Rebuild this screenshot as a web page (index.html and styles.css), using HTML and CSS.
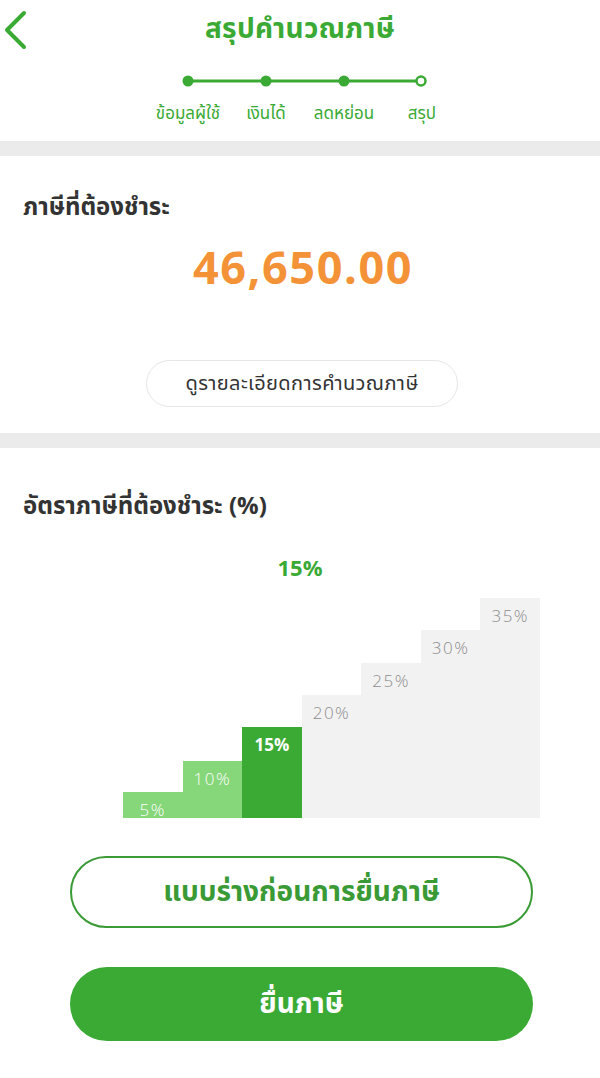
FILE: index.html
```html
<!DOCTYPE html>
<html lang="th">
<head>
<meta charset="utf-8">
<title>สรุปคำนวณภาษี</title>
<link rel="stylesheet" href="styles.css">
</head>
<body>
<div class="page">
  <header class="header">
    <div class="top-row">
      <button class="back" aria-label="back">
        <svg width="24" height="40" viewBox="0 0 24 40"><path d="M21 3 L4 20 L21 37" fill="none" stroke="#3aaa35" stroke-width="4" stroke-linecap="round" stroke-linejoin="round"/></svg>
      </button>
      <h1 class="title">สรุปคำนวณภาษี</h1>
      <span class="spacer"></span>
    </div>
    <div class="stepper">
      <svg class="step-line" width="312" height="14" viewBox="0 0 312 14">
        <line x1="39" y1="7" x2="272" y2="7" stroke="#3aaa35" stroke-width="3"/>
        <circle cx="39" cy="7" r="5.5" fill="#3aaa35"/>
        <circle cx="117" cy="7" r="5.5" fill="#3aaa35"/>
        <circle cx="195" cy="7" r="5.5" fill="#3aaa35"/>
        <circle cx="272" cy="7" r="4.5" fill="#fff" stroke="#3aaa35" stroke-width="2.5"/>
      </svg>
      <div class="step-labels">
        <span>ข้อมูลผู้ใช้</span>
        <span>เงินได้</span>
        <span>ลดหย่อน</span>
        <span>สรุป</span>
      </div>
    </div>
  </header>

  <div class="band"></div>

  <section class="card tax-card">
    <h2 class="card-title">ภาษีที่ต้องชำระ</h2>
    <div class="amount">46,650.00</div>
    <button class="detail-btn">ดูรายละเอียดการคำนวณภาษี</button>
  </section>

  <div class="band"></div>

  <section class="card rate-card">
    <h2 class="card-title">อัตราภาษีที่ต้องชำระ (%)</h2>
    <div class="current-rate">15%</div>
    <div class="chart">
      <div class="bar light" style="height:26px"><span>5%</span></div>
      <div class="bar light" style="height:57px"><span>10%</span></div>
      <div class="bar active" style="height:91px"><span>15%</span></div>
      <div class="bar" style="height:123px"><span>20%</span></div>
      <div class="bar" style="height:155px"><span>25%</span></div>
      <div class="bar" style="height:188px"><span>30%</span></div>
      <div class="bar" style="height:220px"><span>35%</span></div>
    </div>
    <div class="actions">
      <button class="btn btn-outline">แบบร่างก่อนการยื่นภาษี</button>
      <button class="btn btn-fill">ยื่นภาษี</button>
    </div>
  </section>
</div>
</body>
</html>
```

FILE: styles.css
```css
* { box-sizing: border-box; }
html, body { margin: 0; padding: 0; background: #fff; }
body {
  font-family: "Noto Sans Thai", "Noto Sans", "Open Sans", sans-serif;
  color: #333;
}
.page { width: 600px; display: flex; flex-direction: column; }

.header { height: 141px; padding-top: 10px; }
.top-row {
  display: grid;
  grid-template-columns: 50px 1fr 50px;
  align-items: center;
  height: 40px;
}
.back {
  border: 0; background: none; padding: 0 0 0 3px; margin: 0;
  display: flex; align-items: center; height: 40px; cursor: pointer;
}
.title {
  margin: 0; text-align: center;
  font-size: 28px; font-weight: 700; color: #3aaa35;
  line-height: 40px; letter-spacing: 0.3px;
}
.stepper { width: 312px; margin: 24px 0 0 149px; }
.step-line { display: block; }
.step-labels {
  display: grid; grid-template-columns: repeat(4, 78px);
  margin-top: 14px;
}
.step-labels span {
  text-align: center; font-size: 17px; color: #3aaa35; line-height: 24px;
  white-space: nowrap;
}

.band { height: 15px; background: #ebebeb; }

.card { padding: 0 23px; }
.tax-card { height: 277px; display: flex; flex-direction: column; padding-top: 36px; }
.card-title {
  margin: 0; font-size: 24px; font-weight: 700; color: #333; line-height: 32px;
}
.amount {
  text-align: center; font-size: 45px; font-weight: 700; color: #f39237;
  line-height: 52px; margin-top: 20px; letter-spacing: 1.6px; padding-left: 6px;
}
.detail-btn {
  align-self: center; margin-top: 64px;
  height: 47px; width: 312px; margin-left: 4px;
  border: 1.5px solid #e6e6e6; border-radius: 24px; background: #fff;
  font-family: inherit; font-size: 20px; color: #333; letter-spacing: 0.4px;
  padding: 0;
}

.rate-card { padding-top: 43px; }
.current-rate {
  text-align: center; font-size: 22px; font-weight: 700; color: #3aaa35;
  line-height: 28px; margin-top: 33px;
}
.chart {
  display: flex; align-items: flex-end;
  width: 417px; height: 220px; margin: 14px 0 0 100px;
}
.bar { flex: 1; background: #f2f2f2; text-align: center; padding-top: 8px; }
.bar span {
  display: block; font-family: "Open Sans", sans-serif; font-weight: 300;
  font-size: 17px; line-height: 20px; color: #8e8e8e; letter-spacing: 1.5px;
}
.bar.light { background: #86d67a; }
.bar.light span { color: #fff; }
.bar.active { background: #3aaa35; }
.bar.active span { color: #fff; font-weight: 700; letter-spacing: 0; }

.actions { display: flex; flex-direction: column; gap: 39px; padding: 38px 44px 0 47px; }
.btn {
  border-radius: 37px; font-family: inherit;
  font-size: 28px; font-weight: 700; padding: 0;
}
.btn-outline { background: #fff; border: 2.5px solid #3a9a35; color: #3a9a35; height: 72px; }
.btn-fill { background: #3aaa35; border: 0; color: #fff; height: 74px; }
```
